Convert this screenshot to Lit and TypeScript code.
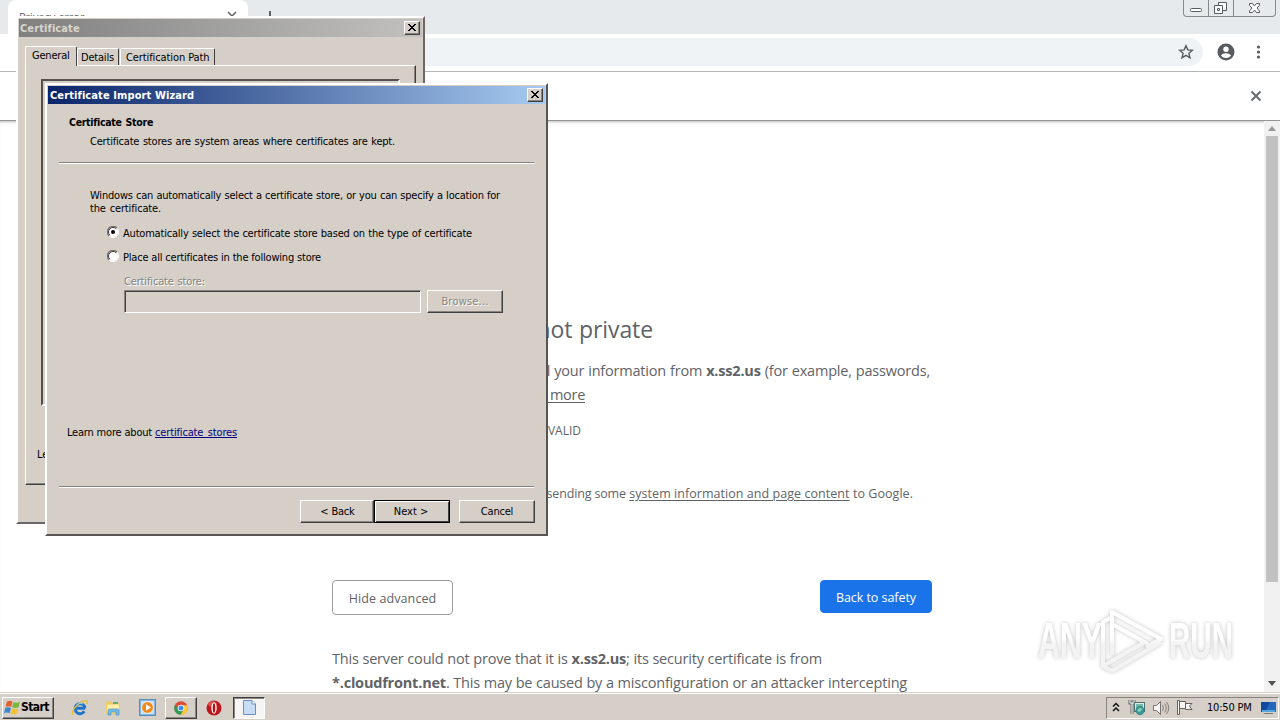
import { LitElement, html, css, svg } from 'lit';
import { customElement, property, state } from 'lit/decorators.js';
import { classMap } from 'lit/directives/class-map.js';

@customElement('close-box')
class CloseBox extends LitElement {
  static styles = css`
    :host {
      display: block;
      box-sizing: border-box;
      width: 16px;
      height: 14px;
      background: #d5cfc8;
      border: 1px solid;
      border-color: #fff #404040 #404040 #fff;
      box-shadow: inset -1px -1px #888480;
    }

    svg {
      display: block;
    }
  `;

  render() {
    return html`
      <svg width="14" height="12" viewBox="0 0 14 12">
        <path d="M3 2h2v1h1v1h2V3h1V2h2v1h-1v1H9v1H8v1h1v1h1v1h1v1H9V8H8V7H6v1H5v1H3V8h1V7h1V6h1V5H5V4H4V3H3z" fill="#000" />
      </svg>
    `;
  }
}

@customElement('task-bar')
class TaskBar extends LitElement {
  static styles = css`
    :host {
      display: flex;
      align-items: center;
      box-sizing: border-box;
      height: 28px;
      padding: 2px 0 0 2px;
      background: #d5cfc8;
      border-top: 1px solid #d5d1c9;
      box-shadow: inset 0 1px #fff;
      font: 11px/13px 'DejaVu Sans Condensed', 'DejaVu Sans', sans-serif;
      color: #000;
    }

    svg {
      display: block;
      flex: none;
    }

    .start,
    .task {
      display: flex;
      align-items: center;
      box-sizing: border-box;
      height: 22px;
      border: 1px solid;
      border-color: #fff #404040 #404040 #fff;
      box-shadow: inset -1px -1px #888480;
    }

    .start {
      width: 52px;
      padding-left: 1px;
      font-weight: bold;
      font-size: 12px;
      letter-spacing: -0.55px;
      margin-right: 17px;
    }

    .task {
      width: 32px;
      justify-content: center;
      margin: 0 9px 0 9px;
    }

    .pressed {
      border-color: #404040 #fff #fff #404040;
      box-shadow: inset 1px 1px #888480;
      background: #f6f5f3;
      margin: 0 0 0 11px;
    }

    .quick {
      margin-right: 17px;
    }

    .folder {
      margin-right: 18px;
      margin-left: -1px;
    }

    .tray {
      display: flex;
      align-items: center;
      box-sizing: border-box;
      width: 173px;
      height: 22px;
      margin: 0 1px 0 auto;
      padding-left: 5px;
      border: 1px solid;
      border-color: #888480 #fff #fff #888480;
    }

    .network {
      margin-left: 8px;
    }

    .sound {
      margin-left: 6px;
    }

    .flag {
      margin-left: 6px;
    }

    .clock {
      width: 46px;
      margin: 0 7px 0 13px;
      white-space: nowrap;
      letter-spacing: -0.2px;
    }
  `;

  render() {
    return html`
      <div class="start">
        <svg width="17" height="17" viewBox="0 0 17 17">
          <path d="M3 2.500Q6 .8 8.500 2.500L7.200 8Q4.500 6.500 1.500 7.800z" fill="#e4622a" />
          <path d="M9.500 3Q12.500 4.500 16 2.800L14.500 8.300Q11.500 9.800 8.200 8.300z" fill="#7ab83c" />
          <path d="M1.200 9Q4 7.600 7 9.100L5.600 14.300Q3 12.900 0 14z" fill="#3d87cf" />
          <path d="M8 9.500Q11 11 14.200 9.500L12.800 14.500Q9.600 16.200 6.600 14.700z" fill="#f6bf32" />
        </svg>
        <span>Start</span>
      </div>
      <svg class="quick" width="18" height="18" viewBox="0 0 18 18">
        <path d="M14.300 9.200H5.200M14 9A5 5 0 1 0 13.300 12.300" fill="none" stroke="#1f76c8" stroke-width="3" />
        <path d="M2 15.800C-.5 12.500 6 4.500 12 2.200C16 .8 17.500 2.200 15.500 5" fill="none" stroke="#e8bd38" stroke-width="1.500" />
        <path d="M5.400 6.200Q8.500 2.800 12 4.800" fill="none" stroke="#7fd0fa" />
      </svg>
      <svg class="folder" width="16" height="16" viewBox="0 0 16 16">
        <path d="M1 1.500h5l1 1.500h8v11H1z" fill="#eecb61" />
        <path d="M2 4.500h12v8H2z" fill="#fbedab" />
        <path d="M8 2h5v2H8z" fill="#67aa75" />
        <path d="M3 15V10.500q0-1.500 1.500-1.500h8q1.500 0 1.500 1.500V15h-3v-3H6v3z" fill="#72bce4" stroke="#458fb9" stroke-width=".6" />
      </svg>
      <svg width="17" height="17" viewBox="0 0 17 17">
        <rect x=".5" y=".5" width="16" height="16" fill="#85b8e4" stroke="#568abb" />
        <rect x="2" y="2" width="13" height="13" fill="#c6e0f5" />
        <circle cx="8.500" cy="8.500" r="5.800" fill="#f08a1d" stroke="#fff" stroke-width=".6" />
        <path d="M7 5.300l5 3.200-5 3.200z" fill="#fff" />
      </svg>
      <div class="task">
        <svg width="16" height="16" viewBox="0 0 16 16">
          <circle cx="8" cy="8" r="6.800" fill="#dc4a38" />
          <path d="M2.100 4.700A6.800 6.800 0 0 0 7.500 14.800L10.900 9.500 8 8 5.200 9.500z" fill="#279d57" />
          <path d="M14.300 5.200A6.800 6.800 0 0 1 7.500 14.800L11 9.500 10 5.200z" fill="#f8ca37" />
          <circle cx="8" cy="8" r="3.300" fill="#fff" />
          <circle cx="8" cy="8" r="2.500" fill="#4789eb" />
        </svg>
      </div>
      <svg width="16" height="16" viewBox="0 0 16 16">
        <ellipse cx="8" cy="8" rx="7.500" ry="7.500" fill="#bf1519" />
        <ellipse cx="6.500" cy="4" rx="4.500" ry="2.700" fill="#d9504c" />
        <ellipse cx="8" cy="8" rx="2.700" ry="5.700" fill="#fff" />
        <ellipse cx="8" cy="8" rx="1.300" ry="4.800" fill="#aa1015" />
      </svg>
      <div class="task pressed">
        <svg width="15" height="17" viewBox="0 0 15 17">
          <path d="M1.500 1.500h8.500l3.500 3.500v10.500H1.500z" fill="#c7ddf4" stroke="#6d8eb8" />
          <path d="M10 1.500V5h3.500" fill="#fff" stroke="#6d8eb8" />
        </svg>
      </div>
      <div class="tray">
        <svg width="8" height="14" viewBox="0 0 8 14">
          <path d="M1 5.500l3-3 3 3M1 10l3-3 3 3" fill="none" stroke="#111" stroke-width="1.500" />
        </svg>
        <svg class="network" width="18" height="17" viewBox="0 0 18 17">
          <path d="M2 1v3h4V1M4 4v11" stroke="#666" stroke-width="3" fill="none" />
          <path d="M2 1v3h4V1M4 4v11" stroke="#fff" fill="none" />
          <rect x="6.500" y="3.500" width="10" height="9" fill="#dceae7" stroke="#50706d" />
          <path d="M8 5h7v6H8z" fill="#75b9b0" />
          <circle cx="12" cy="11.500" r="4.200" fill="#3a9b99" stroke="#22716f" stroke-width=".6" />
          <path d="M9 11.500q3-4 5-1.500-1 3-3 3z" fill="#8ed0b7" />
        </svg>
        <svg class="sound" width="18" height="16" viewBox="0 0 18 16">
          <path d="M1.500 5.500h3l4-4v13l-4-4h-3z" fill="#f5f4f2" stroke="#77736e" />
          <path d="M10.500 5q2 3 0 6M12.500 3.500q3.500 4.500 0 9M14.500 2q4.500 6 0 12" fill="none" stroke="#85817c" />
        </svg>
        <svg class="flag" width="18" height="17" viewBox="0 0 18 17">
          <path d="M1.500 1.500h2v14h-2zM3.500 2.500h6v7h-6zM9.500 4.500h6.500L13.500 7l2.500 3.500H9.500z" fill="#f8f7f5" stroke="#65615d" />
        </svg>
        <span class="clock">10:50 PM</span>
        <svg width="17" height="14" viewBox="0 0 17 14">
          <rect x="1" y="1" width="15" height="10" fill="#2267bc" />
          <path d="M1 1h9L5 11H1z" fill="#0e489c" />
          <path d="M2 9h13v2H2z" fill="#51a5dc" />
          <path d="M5 12h8v1H3z" fill="#777" />
        </svg>
      </div>
    `;
  }
}

@customElement('certificate-window')
class CertificateWindow extends LitElement {
  @property() active = 'General';

  static styles = css`
    :host {
      display: block;
      box-sizing: border-box;
      width: 409px;
      height: 508px;
      padding: 1px;
      background: #d5cfc8;
      border: 2px solid;
      border-color: #fff #6a6764 #6a6764 #fff;
      font: 11px/13px 'DejaVu Sans Condensed', 'DejaVu Sans', sans-serif;
      color: #000;
    }

    .title {
      display: flex;
      align-items: center;
      justify-content: space-between;
      height: 18px;
      padding: 0 2px 0 1px;
      background: linear-gradient(90deg, #808080, #c2c1c0);
      color: #d9d4cd;
      font-weight: bold;
      letter-spacing: 0.1px;
    }

    .tabs {
      display: flex;
      align-items: flex-end;
      margin: 9px 0 0 6px;
      height: 19px;
    }

    .tab {
      box-sizing: border-box;
      height: 17px;
      padding: 2px 0 0 3px;
      border: 1px solid;
      border-color: #fff #404040 transparent #fff;
      border-radius: 2px 2px 0 0;
      border-bottom: 0;
      white-space: nowrap;
      letter-spacing: -0.2px;
    }

    .tab.active {
      height: 20px;
      width: 52px;
      padding: 2px 0 0 6px;
      margin-bottom: -1px;
      background: #d5cfc8;
      position: relative;
    }

    .tab.details {
      width: 42px;
    }

    .tab.path {
      width: 95px;
      padding-left: 5px;
      margin-left: 1px;
      letter-spacing: -0.1px;
    }

    .panel {
      box-sizing: border-box;
      width: 391px;
      height: 420px;
      margin-left: 6px;
      padding: 13px 0 0 15px;
      border: 1px solid;
      border-color: #fff #404040 #404040 #fff;
      box-shadow: inset -1px -1px #888480;
    }

    .info {
      box-sizing: border-box;
      width: 359px;
      height: 327px;
      border: 2px solid;
      border-color: #55504b #fff #fff #55504b;
    }

    .learn {
      margin: 42px 0 0 -4px;
    }
  `;

  render() {
    const tabs = [
      ['General', ''],
      ['Details', 'details'],
      ['Certification Path', 'path'],
    ];
    return html`
      <div class="title"><span>Certificate</span><close-box></close-box></div>
      <div class="tabs">
        ${tabs.map(
          ([label, kind]) => html`
            <div class=${classMap({ tab: true, active: label === this.active, details: kind === 'details', path: kind === 'path' })}>${label}</div>
          `
        )}
      </div>
      <div class="panel">
        <div class="info"></div>
        <div class="learn">Learn</div>
      </div>
    `;
  }
}

@customElement('import-wizard')
class ImportWizard extends LitElement {
  @state() private automatic = true;

  static styles = css`
    :host {
      display: block;
      box-sizing: border-box;
      width: 503px;
      height: 453px;
      padding: 1px;
      background: #d5cfc8;
      border: 2px solid;
      border-color: #fff #575451 #575451 #fff;
      font: 11px/13px 'DejaVu Sans Condensed', 'DejaVu Sans', sans-serif;
      letter-spacing: -0.2px;
      color: #000;
      white-space: nowrap;
    }

    .title {
      display: flex;
      align-items: center;
      justify-content: space-between;
      height: 18px;
      padding: 0 2px 0 2px;
      background: linear-gradient(90deg, #0a246a, #a6caf0);
      color: #fff;
      font-weight: bold;
      letter-spacing: 0.1px;
    }

    .fit {
      text-align-last: justify;
    }

    .heading {
      width: 84px;
      margin: 12px 0 0 21px;
      font-weight: bold;
      font-size: 10.5px;
      letter-spacing: -0.3px;
    }

    .sub {
      width: 305px;
      margin: 6px 0 0 42px;
    }

    .rule {
      width: 475px;
      height: 1px;
      margin: 14px 0 0 11px;
      background: #85807b;
      border-bottom: 1px solid #fff;
    }

    .intro {
      margin: 25px 0 0 42px;
    }

    .intro-1 {
      width: 410px;
    }

    .intro-2 {
      width: 71px;
      letter-spacing: -0.15px;
    }

    .option {
      display: flex;
      gap: 4px;
      height: 13px;
      margin: 11px 0 0 59px;
    }

    .auto,
    .place {
      width: 349px;
      padding-top: 1px;
    }

    .place {
      width: 198px;
    }

    .off {
      color: #888480;
      text-shadow: 1px 1px #fff;
    }

    .label {
      width: 81px;
      margin: 12px 0 0 76px;
      letter-spacing: -0.15px;
    }

    .row {
      display: flex;
      gap: 6px;
      margin: 2px 0 0 76px;
    }

    .field {
      box-sizing: border-box;
      width: 297px;
      height: 23px;
      border: 1px solid;
      border-color: #888480 #fff #fff #888480;
      box-shadow: inset 1px 1px #404040;
    }

    .button {
      box-sizing: border-box;
      display: flex;
      align-items: center;
      justify-content: center;
      width: 76px;
      height: 23px;
      padding-bottom: 1px;
      border: 1px solid;
      border-color: #fff #404040 #404040 #fff;
      box-shadow: inset -1px -1px #888480;
      letter-spacing: -0.2px;
    }

    .browse {
      letter-spacing: 0.2px;
    }

    .default {
      border-color: #000;
      box-shadow: inset 1px 1px #fff, inset -1px -1px #404040;
      letter-spacing: 0;
      padding-right: 2px;
    }

    .learn {
      display: flex;
      gap: 3px;
      margin: 113px 0 0 19px;
    }

    .about {
      width: 85px;
    }

    .link {
      width: 82px;
      color: #000080;
      text-decoration: underline;
      letter-spacing: -0.15px;
    }

    .low {
      margin-top: 47px;
    }

    .actions {
      display: flex;
      margin: 12px 0 0 252px;
    }

    .back {
      width: 74px;
      padding-left: 1px;
    }

    .cancel {
      margin-left: 9px;
    }
  `;

  radio(checked: boolean) {
    return html`
      <svg width="12" height="12" viewBox="0 0 12 12">
        <circle cx="6" cy="6" r="5" fill="#fff" />
        <path d="M2 10A5.500 5.500 0 0 1 10 2" fill="none" stroke="#77726e" stroke-width="1.200" />
        <path d="M2.800 9.200A4.500 4.500 0 0 1 9.200 2.800" fill="none" stroke="#333" />
        <path d="M10 2A5.500 5.500 0 0 1 2 10" fill="none" stroke="#fff" />
        ${checked ? svg`<circle cx="6" cy="6" r="2" fill="#000" />` : ''}
      </svg>
    `;
  }

  render() {
    return html`
      <div class="title"><span>Certificate Import Wizard</span><close-box></close-box></div>
      <div class="heading fit">Certificate Store</div>
      <div class="sub fit">Certificate stores are system areas where certificates are kept.</div>
      <div class="rule"></div>
      <div class="intro">
        <div class="intro-1 fit">Windows can automatically select a certificate store, or you can specify a location for</div>
        <div class="intro-2 fit">the certificate.</div>
      </div>
      <div class="option" @click=${() => (this.automatic = true)}>
        ${this.radio(this.automatic)}
        <div class="auto fit">Automatically select the certificate store based on the type of certificate</div>
      </div>
      <div class="option" @click=${() => (this.automatic = false)}>
        ${this.radio(!this.automatic)}
        <div class="place fit">Place all certificates in the following store</div>
      </div>
      <div class="label off fit">Certificate store:</div>
      <div class="row">
        <div class="field"></div>
        <div class="button browse off">Browse...</div>
      </div>
      <div class="learn">
        <span class="about fit">Learn more about</span>
        <span class="link fit">certificate stores</span>
      </div>
      <div class="rule low"></div>
      <div class="actions">
        <div class="button back">&lt; Back</div>
        <div class="button default">Next &gt;</div>
        <div class="button cancel">Cancel</div>
      </div>
    `;
  }
}

@customElement('app-root')
class AppRoot extends LitElement {
  static styles = css`
    :host {
      display: flex;
      flex-direction: column;
      position: relative;
      width: 1280px;
      height: 720px;
      overflow: hidden;
      background: #fff;
      color: #5f6368;
      font-family: 'Open Sans', 'Noto Sans', sans-serif;
    }

    svg {
      display: block;
      flex: none;
    }

    .strip {
      display: flex;
      height: 34px;
      padding-left: 8px;
      background: #e7eaed;
      flex: none;
    }

    .tab {
      display: flex;
      justify-content: space-between;
      box-sizing: border-box;
      width: 240px;
      padding: 9px 10px 0 11px;
      background: #fff;
      border-radius: 8px 8px 0 0;
      font-size: 11px;
      line-height: 15px;
    }

    .plus {
      margin: 9px 0 0 14px;
    }

    .caption {
      display: flex;
      box-sizing: border-box;
      height: 17px;
      width: 93px;
      margin: 0 4px 0 auto;
      border: 1px solid #858a8f;
      border-top: 0;
      border-radius: 0 0 4px 4px;
    }

    .caption svg + svg {
      border-left: 1px solid #858a8f;
    }

    .toolbar {
      display: flex;
      align-items: center;
      flex: none;
      height: 37px;
      border-bottom: 1px solid #b4b6b8;
    }

    .omnibox {
      display: flex;
      align-items: center;
      justify-content: flex-end;
      box-sizing: border-box;
      width: 1109px;
      height: 28px;
      margin: 0 13px 1px 94px;
      padding-right: 9px;
      background: #f0f3f6;
      border-radius: 14px;
    }

    .account {
      margin-bottom: 1px;
    }

    .dots {
      margin: 0 0 1px 16px;
    }

    .infobar {
      display: flex;
      align-items: center;
      justify-content: flex-end;
      box-sizing: border-box;
      flex: none;
      height: 49px;
      padding-right: 18px;
      border-bottom: 1px solid #929496;
    }

    .view {
      display: flex;
      flex: 1;
      min-height: 0;
      overflow: hidden;
      box-shadow: inset 0 3px 3px -2px #bbb;
    }

    .page {
      width: 600px;
      margin-left: 332px;
      white-space: nowrap;
      font-size: 14.5px;
      line-height: 24px;
    }

    .fit {
      text-align-last: justify;
    }

    h1 {
      width: 321px;
      margin: 194px 0 16px;
      font-size: 23px;
      line-height: 28px;
      font-weight: normal;
      letter-spacing: -0.1px;
    }

    .warn {
      width: 598px;
      letter-spacing: -0.2px;
    }

    .more {
      width: 253px;
      letter-spacing: -0.3px;
    }

    .code {
      width: 249px;
      margin-top: 16px;
      font-size: 12px;
      line-height: 16px;
      text-align: right;
    }

    .report {
      width: 581px;
      margin-top: 47px;
      font-size: 12.5px;
      line-height: 16px;
      text-align: right;
      letter-spacing: 0.05px;
    }

    .report span {
      letter-spacing: -0.15px;
    }

    u {
      text-underline-offset: 2px;
      text-decoration-thickness: 1px;
    }

    .choices {
      display: flex;
      justify-content: space-between;
      align-items: flex-start;
      margin: 78px 0 32px;
      height: 35px;
      font-size: 12.5px;
    }

    .choice {
      box-sizing: border-box;
      width: 121px;
      height: 35px;
      border: 1px solid #9a9da0;
      border-radius: 4px;
      text-align: center;
      line-height: 35px;
      letter-spacing: 0.1px;
    }

    .safe {
      width: 112px;
      height: 33px;
      background: #1a73e8;
      border-color: #1a73e8;
      color: #fff;
      line-height: 33px;
      letter-spacing: -0.05px;
    }

    .server {
      width: 490px;
      letter-spacing: -0.2px;
    }

    .cloud {
      width: 575px;
      letter-spacing: -0.2px;
    }

    .scroll {
      display: flex;
      flex-direction: column;
      align-items: center;
      justify-content: space-between;
      box-sizing: border-box;
      width: 16px;
      margin-left: auto;
      padding: 5px 0 6px;
      background: #f1f1f1;
    }

    .thumb {
      width: 12px;
      height: 446px;
      margin: 5px 0 auto;
      background: #c1c1c1;
    }

    .certificate {
      position: absolute;
      left: 16px;
      top: 16px;
    }

    .wizard {
      position: absolute;
      left: 45px;
      top: 83px;
    }

    .mark {
      position: absolute;
      left: 1030px;
      top: 600px;
      filter: drop-shadow(0 0 2px rgba(0, 0, 0, 0.3));
      opacity: 0.8;
      overflow: visible;
      font: bold 50px 'Liberation Sans Narrow', 'Liberation Sans', sans-serif;
    }
  `;

  render() {
    return html`
      <div class="strip">
        <div class="tab">
          <span>Privacy error</span>
          <svg width="12" height="14" viewBox="0 0 12 14"><path d="M2 3l8 8M10 3l-8 8" stroke="#5f6368" stroke-width="1.600" /></svg>
        </div>
        <svg class="plus" width="16" height="16" viewBox="0 0 16 16"><path d="M8 2v12M2 8h12" stroke="#50545a" stroke-width="1.800" /></svg>
        <div class="caption">
          <svg width="24" height="16" viewBox="0 0 24 16"><rect x="6.500" y="8.500" width="11" height="3" rx="1" fill="#fff" stroke="#555b62" /></svg>
          <svg width="24" height="16" viewBox="0 0 24 16">
            <path d="M9.500 2.500h8v8h-8z" fill="#fff" stroke="#555b62" />
            <path d="M5.500 5.500h8v8h-8zM8.500 8.500h2v2h-2z" fill="#fff" stroke="#555b62" />
          </svg>
          <svg width="41" height="16" viewBox="0 0 41 16">
            <path d="M15.500 3.500h3l2 2.500 2-2.500h3v2L23 8l2.500 3v1.500h-3l-2-2.500-2 2.500h-3V11L18 8l-2.500-2.500z" fill="#fff" stroke="#555b62" />
          </svg>
        </div>
      </div>
      <div class="toolbar">
        <div class="omnibox">
          <svg width="16" height="16" viewBox="0 0 16 16">
            <path d="M8 1.700l1.800 4.200 4.600.4-3.500 3 1.100 4.500L8 11.400l-4 2.400 1.100-4.500-3.500-3 4.600-.4z" fill="none" stroke="#565b60" stroke-width="1.400" />
          </svg>
        </div>
        <svg class="account" width="20" height="20" viewBox="0 0 20 20">
          <circle cx="10" cy="10" r="8.500" fill="#565b60" />
          <circle cx="10" cy="7.200" r="2.700" fill="#fff" />
          <path d="M4.900 13.500Q6.500 11.300 10 11.300T15.100 13.500Q13.300 16 10 16T4.900 13.500z" fill="#fff" />
        </svg>
        <svg class="dots" width="12" height="16" viewBox="0 0 12 16" fill="#565b60">
          <circle cx="6.500" cy="3" r="1.600" /><circle cx="6.500" cy="8" r="1.600" /><circle cx="6.500" cy="13" r="1.600" />
        </svg>
      </div>
      <div class="infobar">
        <svg width="12" height="12" viewBox="0 0 12 12"><path d="M1.500 1.500l9 9M10.500 1.500l-9 9" stroke="#666a6e" stroke-width="1.900" /></svg>
      </div>
      <div class="view">
        <div class="page">
          <h1 class="fit">Your connection is not private</h1>
          <div class="warn fit">Attackers might be trying to steal your information from <b>x.ss2.us</b> (for example, passwords,</div>
          <div class="more fit">messages, or credit cards). <u>Learn more</u></div>
          <div class="code">NET::ERR_CERT_COMMON_NAME_INVALID</div>
          <div class="report">Help improve security by <span>sending some</span> <u>system information and page content</u> to Google.</div>
          <div class="choices">
            <div class="choice">Hide advanced</div>
            <div class="choice safe">Back to safety</div>
          </div>
          <div class="server fit">This server could not prove that it is <b>x.ss2.us</b>; its security certificate is from</div>
          <div class="cloud fit"><b>*.cloudfront.net</b>. This may be caused by a misconfiguration or an attacker intercepting</div>
        </div>
        <div class="scroll">
          <svg width="8" height="5" viewBox="0 0 8 5"><path d="M0 5l4-5 4 5z" fill="#999" /></svg>
          <div class="thumb"></div>
          <svg width="8" height="5" viewBox="0 0 8 5"><path d="M0 0l4 5 4-5z" fill="#505050" /></svg>
        </div>
      </div>
      <task-bar></task-bar>
      <certificate-window class="certificate"></certificate-window>
      <import-wizard class="wizard"></import-wizard>
      <svg class="mark" width="230" height="80" viewBox="0 0 230 80">
        <defs>
          <linearGradient id="fade" gradientUnits="userSpaceOnUse" x1="0" y1="38" x2="0" y2="44">
            <stop offset="0" stop-color="#fff" />
            <stop offset="1" stop-color="#f1f1f1" />
          </linearGradient>
        </defs>
        <g fill="url(#fade)">
          <text x="8" y="58" textLength="64" lengthAdjust="spacingAndGlyphs">ANY</text>
          <text x="139" y="58" textLength="64" lengthAdjust="spacingAndGlyphs">RUN</text>
        </g>
        <path d="M82 55V12l49 27-15 8M82 24l36 20M80 18l-7 4v44l42-24M82 71l49-29M73 66l9 5" fill="none" stroke="url(#fade)" stroke-width="4" stroke-linejoin="round" />
      </svg>
    `;
  }
}
